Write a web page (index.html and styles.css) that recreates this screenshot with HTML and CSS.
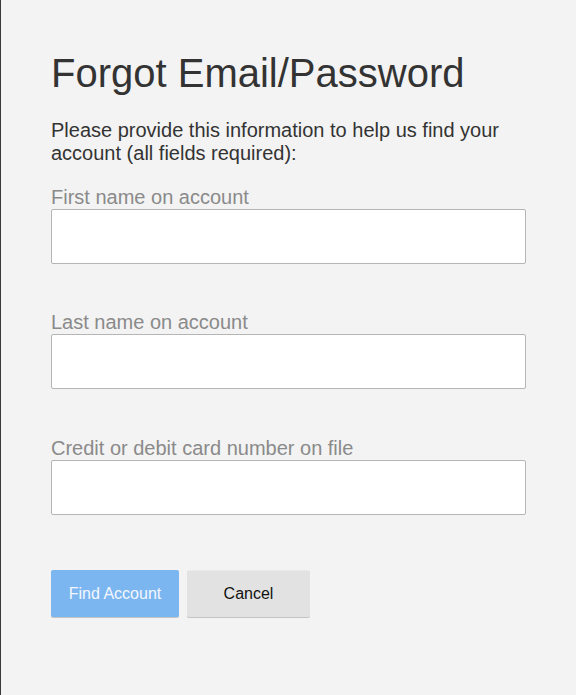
FILE: index.html
```html
<!DOCTYPE html>
<html lang="en">
<head>
<meta charset="utf-8">
<title>Forgot Email/Password</title>
<link rel="stylesheet" href="styles.css">
</head>
<body>
<main class="page">
  <h1 class="title">Forgot Email/Password</h1>
  <p class="intro">Please provide this information to help us find your account (all fields required):</p>
  <form class="form">
    <div class="field">
      <label class="label" for="first">First name on account</label>
      <input class="input" id="first" type="text">
    </div>
    <div class="field field-mid">
      <label class="label" for="last">Last name on account</label>
      <input class="input" id="last" type="text">
    </div>
    <div class="field field-last">
      <label class="label" for="card">Credit or debit card number on file</label>
      <input class="input" id="card" type="text">
    </div>
    <div class="actions">
      <button class="btn btn-primary" type="button">Find Account</button>
      <button class="btn btn-secondary" type="button">Cancel</button>
    </div>
  </form>
</main>
</body>
</html>
```
FILE: styles.css
```css
html, body {
  margin: 0;
  padding: 0;
  height: 100%;
}
body {
  background: #f3f3f3;
  font-family: "Liberation Sans", Arial, sans-serif;
  color: #333333;
}
.page {
  box-sizing: border-box;
  min-height: 100%;
  border-left: 1px solid #3a3a3a;
  padding: 50px 50px 0 50px;
}
.title {
  margin: 0;
  font-size: 40px;
  font-weight: normal;
  line-height: 46px;
  color: #333333;
}
.intro {
  margin: 23px 0 0 0;
  font-size: 20px;
  line-height: 23px;
  color: #333333;
}
.form {
  margin: 21px 0 0 0;
  width: 475px;
}
.field {
  display: flex;
  flex-direction: column;
  margin-bottom: 47px;
}
.field-mid {
  margin-bottom: 48px;
}
.field-last {
  margin-bottom: 55px;
}
.label {
  font-size: 20px;
  line-height: 23px;
  color: #8a8a8a;
}
.input {
  box-sizing: border-box;
  width: 475px;
  height: 55px;
  margin: 0;
  border: 1px solid #b5b5b5;
  border-radius: 2px;
  background: #ffffff;
  font-family: inherit;
  font-size: 18px;
  padding: 0 10px;
}
.actions {
  display: flex;
  gap: 8px;
}
.btn {
  box-sizing: border-box;
  height: 47px;
  border: none;
  border-radius: 2px;
  font-family: "Liberation Sans", Arial, sans-serif;
  font-size: 16px;
  padding: 0;
  box-shadow: 0 1px 0 #c4c4c4;
}
.btn-primary {
  width: 128px;
  background: #7cb6f1;
  color: #f4f8fe;
}
.btn-secondary {
  width: 123px;
  background: #e2e2e2;
  color: #111111;
  border-top: 1px dotted #f2f2f2;
}
```
